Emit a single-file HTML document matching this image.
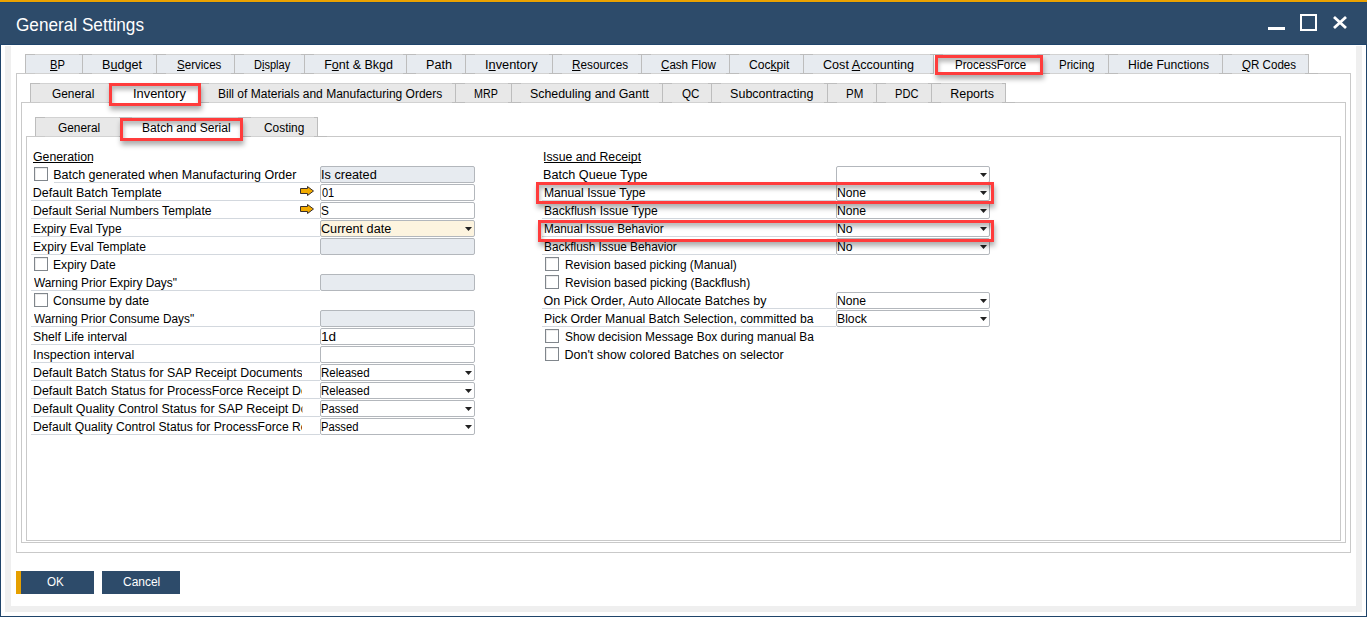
<!DOCTYPE html>
<html><head><meta charset="utf-8"><style>
html,body{margin:0;padding:0;width:1367px;height:617px;overflow:hidden;background:#fff;font-family:'Liberation Sans', sans-serif;}
u{text-decoration:underline;text-underline-offset:1px;}
</style></head><body>
<div style="position:absolute;left:0px;top:0px;width:1367px;height:617px;background:#fff"></div>
<div style="position:absolute;left:0px;top:0px;width:1367px;height:2px;background:#eba200"></div>
<div style="position:absolute;left:0px;top:2px;width:1367px;height:1px;background:#21486f"></div>
<div style="position:absolute;left:0px;top:3px;width:1367px;height:42px;background:#2d4b6a"></div>
<div style="position:absolute;left:0px;top:44px;width:1367px;height:1px;background:#1f446a"></div>
<div style="position:absolute;left:0px;top:45px;width:1px;height:572px;background:#1f446a"></div>
<div style="position:absolute;left:1366px;top:45px;width:1px;height:572px;background:#1f446a"></div>
<div style="position:absolute;left:0px;top:616px;width:1367px;height:1px;background:#1f446a"></div>
<div style="position:absolute;left:5px;top:46px;width:6px;height:566px;background:#efefef"></div>
<div style="position:absolute;left:1356px;top:46px;width:6px;height:566px;background:#efefef"></div>
<div style="position:absolute;left:5px;top:606px;width:1357px;height:6px;background:#efefef"></div>
<div style="position:absolute;left:1268px;top:27px;width:17px;height:3px;background:#fff"></div>
<div style="position:absolute;left:1300px;top:14px;width:17px;height:17px;border:2px solid #fff;box-sizing:border-box"></div>
<svg style="position:absolute;left:1331px;top:14px" width="18" height="18"><path d="M3 3 L15 14 M15 3 L3 14" stroke="#fff" stroke-width="2.8"/></svg>
<div style="position:absolute;left:16px;top:73px;width:1335px;height:480px;border:1px solid #c9c9c9;box-sizing:border-box"></div>
<div style="position:absolute;left:21px;top:102px;width:1325px;height:441px;border:1px solid #c9c9c9;box-sizing:border-box"></div>
<div style="position:absolute;left:26px;top:136px;width:1315px;height:405px;border:1px solid #c9c9c9;box-sizing:border-box"></div>
<div style="position:absolute;left:25px;top:54px;width:58px;height:19px;background:#e7ebf0"></div>
<div style="position:absolute;left:82px;top:54px;width:75px;height:19px;background:#e7ebf0"></div>
<div style="position:absolute;left:156px;top:54px;width:79px;height:19px;background:#e7ebf0"></div>
<div style="position:absolute;left:234px;top:54px;width:71px;height:19px;background:#e7ebf0"></div>
<div style="position:absolute;left:304px;top:54px;width:103px;height:19px;background:#e7ebf0"></div>
<div style="position:absolute;left:406px;top:54px;width:60px;height:19px;background:#e7ebf0"></div>
<div style="position:absolute;left:465px;top:54px;width:88px;height:19px;background:#e7ebf0"></div>
<div style="position:absolute;left:552px;top:54px;width:90px;height:19px;background:#e7ebf0"></div>
<div style="position:absolute;left:641px;top:54px;width:89px;height:19px;background:#e7ebf0"></div>
<div style="position:absolute;left:729px;top:54px;width:75px;height:19px;background:#e7ebf0"></div>
<div style="position:absolute;left:803px;top:54px;width:131px;height:19px;background:#e7ebf0"></div>
<div style="position:absolute;left:933px;top:54px;width:108px;height:19px;background:#fff"></div>
<div style="position:absolute;left:1040px;top:54px;width:69px;height:19px;background:#e7ebf0"></div>
<div style="position:absolute;left:1108px;top:54px;width:115px;height:19px;background:#e7ebf0"></div>
<div style="position:absolute;left:1222px;top:54px;width:87px;height:19px;background:#e7ebf0"></div>
<div style="position:absolute;left:25px;top:54px;width:1284px;height:1px;background:#d2d2d2"></div>
<div style="position:absolute;left:25px;top:54px;width:1px;height:19px;background:#bdbdbd"></div>
<div style="position:absolute;left:82px;top:54px;width:1px;height:19px;background:#bdbdbd"></div>
<div style="position:absolute;left:156px;top:54px;width:1px;height:19px;background:#bdbdbd"></div>
<div style="position:absolute;left:234px;top:54px;width:1px;height:19px;background:#bdbdbd"></div>
<div style="position:absolute;left:304px;top:54px;width:1px;height:19px;background:#bdbdbd"></div>
<div style="position:absolute;left:406px;top:54px;width:1px;height:19px;background:#bdbdbd"></div>
<div style="position:absolute;left:465px;top:54px;width:1px;height:19px;background:#bdbdbd"></div>
<div style="position:absolute;left:552px;top:54px;width:1px;height:19px;background:#bdbdbd"></div>
<div style="position:absolute;left:641px;top:54px;width:1px;height:19px;background:#bdbdbd"></div>
<div style="position:absolute;left:729px;top:54px;width:1px;height:19px;background:#bdbdbd"></div>
<div style="position:absolute;left:803px;top:54px;width:1px;height:19px;background:#bdbdbd"></div>
<div style="position:absolute;left:933px;top:54px;width:1px;height:19px;background:#bdbdbd"></div>
<div style="position:absolute;left:1040px;top:54px;width:1px;height:19px;background:#bdbdbd"></div>
<div style="position:absolute;left:1108px;top:54px;width:1px;height:19px;background:#bdbdbd"></div>
<div style="position:absolute;left:1222px;top:54px;width:1px;height:19px;background:#bdbdbd"></div>
<div style="position:absolute;left:1308px;top:54px;width:1px;height:19px;background:#bdbdbd"></div>
<div style="position:absolute;left:35px;top:73px;width:1273px;height:1px;background:#d2d2d2"></div>
<div style="position:absolute;left:25px;top:54px;width:10px;height:1px;background:#bdbdbd"></div>
<div style="position:absolute;left:79px;top:54px;width:13px;height:1px;background:#bdbdbd"></div>
<div style="position:absolute;left:79px;top:73px;width:13px;height:1px;background:#bdbdbd"></div>
<div style="position:absolute;left:153px;top:54px;width:13px;height:1px;background:#bdbdbd"></div>
<div style="position:absolute;left:153px;top:73px;width:13px;height:1px;background:#bdbdbd"></div>
<div style="position:absolute;left:231px;top:54px;width:13px;height:1px;background:#bdbdbd"></div>
<div style="position:absolute;left:231px;top:73px;width:13px;height:1px;background:#bdbdbd"></div>
<div style="position:absolute;left:301px;top:54px;width:13px;height:1px;background:#bdbdbd"></div>
<div style="position:absolute;left:301px;top:73px;width:13px;height:1px;background:#bdbdbd"></div>
<div style="position:absolute;left:403px;top:54px;width:13px;height:1px;background:#bdbdbd"></div>
<div style="position:absolute;left:403px;top:73px;width:13px;height:1px;background:#bdbdbd"></div>
<div style="position:absolute;left:462px;top:54px;width:13px;height:1px;background:#bdbdbd"></div>
<div style="position:absolute;left:462px;top:73px;width:13px;height:1px;background:#bdbdbd"></div>
<div style="position:absolute;left:549px;top:54px;width:13px;height:1px;background:#bdbdbd"></div>
<div style="position:absolute;left:549px;top:73px;width:13px;height:1px;background:#bdbdbd"></div>
<div style="position:absolute;left:638px;top:54px;width:13px;height:1px;background:#bdbdbd"></div>
<div style="position:absolute;left:638px;top:73px;width:13px;height:1px;background:#bdbdbd"></div>
<div style="position:absolute;left:726px;top:54px;width:13px;height:1px;background:#bdbdbd"></div>
<div style="position:absolute;left:726px;top:73px;width:13px;height:1px;background:#bdbdbd"></div>
<div style="position:absolute;left:800px;top:54px;width:13px;height:1px;background:#bdbdbd"></div>
<div style="position:absolute;left:800px;top:73px;width:13px;height:1px;background:#bdbdbd"></div>
<div style="position:absolute;left:930px;top:54px;width:13px;height:1px;background:#bdbdbd"></div>
<div style="position:absolute;left:930px;top:73px;width:13px;height:1px;background:#bdbdbd"></div>
<div style="position:absolute;left:1037px;top:54px;width:13px;height:1px;background:#bdbdbd"></div>
<div style="position:absolute;left:1037px;top:73px;width:13px;height:1px;background:#bdbdbd"></div>
<div style="position:absolute;left:1105px;top:54px;width:13px;height:1px;background:#bdbdbd"></div>
<div style="position:absolute;left:1105px;top:73px;width:13px;height:1px;background:#bdbdbd"></div>
<div style="position:absolute;left:1219px;top:54px;width:13px;height:1px;background:#bdbdbd"></div>
<div style="position:absolute;left:1219px;top:73px;width:13px;height:1px;background:#bdbdbd"></div>
<div style="position:absolute;left:1305px;top:54px;width:4px;height:1px;background:#bdbdbd"></div>
<div style="position:absolute;left:1305px;top:73px;width:13px;height:1px;background:#bdbdbd"></div>
<div style="position:absolute;left:934px;top:73px;width:106px;height:1px;background:#fff"></div>
<div style="position:absolute;left:30px;top:83px;width:82px;height:19px;background:#e8e8e8"></div>
<div style="position:absolute;left:111px;top:83px;width:89px;height:19px;background:#fff"></div>
<div style="position:absolute;left:199px;top:83px;width:257px;height:19px;background:#e8e8e8"></div>
<div style="position:absolute;left:455px;top:83px;width:57px;height:19px;background:#e8e8e8"></div>
<div style="position:absolute;left:511px;top:83px;width:152px;height:19px;background:#e8e8e8"></div>
<div style="position:absolute;left:662px;top:83px;width:50px;height:19px;background:#e8e8e8"></div>
<div style="position:absolute;left:711px;top:83px;width:117px;height:19px;background:#e8e8e8"></div>
<div style="position:absolute;left:827px;top:83px;width:50px;height:19px;background:#e8e8e8"></div>
<div style="position:absolute;left:876px;top:83px;width:56px;height:19px;background:#e8e8e8"></div>
<div style="position:absolute;left:931px;top:83px;width:75px;height:19px;background:#e8e8e8"></div>
<div style="position:absolute;left:30px;top:83px;width:976px;height:1px;background:#d2d2d2"></div>
<div style="position:absolute;left:30px;top:83px;width:1px;height:19px;background:#bdbdbd"></div>
<div style="position:absolute;left:111px;top:83px;width:1px;height:19px;background:#bdbdbd"></div>
<div style="position:absolute;left:199px;top:83px;width:1px;height:19px;background:#bdbdbd"></div>
<div style="position:absolute;left:455px;top:83px;width:1px;height:19px;background:#bdbdbd"></div>
<div style="position:absolute;left:511px;top:83px;width:1px;height:19px;background:#bdbdbd"></div>
<div style="position:absolute;left:662px;top:83px;width:1px;height:19px;background:#bdbdbd"></div>
<div style="position:absolute;left:711px;top:83px;width:1px;height:19px;background:#bdbdbd"></div>
<div style="position:absolute;left:827px;top:83px;width:1px;height:19px;background:#bdbdbd"></div>
<div style="position:absolute;left:876px;top:83px;width:1px;height:19px;background:#bdbdbd"></div>
<div style="position:absolute;left:931px;top:83px;width:1px;height:19px;background:#bdbdbd"></div>
<div style="position:absolute;left:1005px;top:83px;width:1px;height:19px;background:#bdbdbd"></div>
<div style="position:absolute;left:40px;top:102px;width:965px;height:1px;background:#d2d2d2"></div>
<div style="position:absolute;left:30px;top:83px;width:10px;height:1px;background:#bdbdbd"></div>
<div style="position:absolute;left:108px;top:83px;width:13px;height:1px;background:#bdbdbd"></div>
<div style="position:absolute;left:108px;top:102px;width:13px;height:1px;background:#bdbdbd"></div>
<div style="position:absolute;left:196px;top:83px;width:13px;height:1px;background:#bdbdbd"></div>
<div style="position:absolute;left:196px;top:102px;width:13px;height:1px;background:#bdbdbd"></div>
<div style="position:absolute;left:452px;top:83px;width:13px;height:1px;background:#bdbdbd"></div>
<div style="position:absolute;left:452px;top:102px;width:13px;height:1px;background:#bdbdbd"></div>
<div style="position:absolute;left:508px;top:83px;width:13px;height:1px;background:#bdbdbd"></div>
<div style="position:absolute;left:508px;top:102px;width:13px;height:1px;background:#bdbdbd"></div>
<div style="position:absolute;left:659px;top:83px;width:13px;height:1px;background:#bdbdbd"></div>
<div style="position:absolute;left:659px;top:102px;width:13px;height:1px;background:#bdbdbd"></div>
<div style="position:absolute;left:708px;top:83px;width:13px;height:1px;background:#bdbdbd"></div>
<div style="position:absolute;left:708px;top:102px;width:13px;height:1px;background:#bdbdbd"></div>
<div style="position:absolute;left:824px;top:83px;width:13px;height:1px;background:#bdbdbd"></div>
<div style="position:absolute;left:824px;top:102px;width:13px;height:1px;background:#bdbdbd"></div>
<div style="position:absolute;left:873px;top:83px;width:13px;height:1px;background:#bdbdbd"></div>
<div style="position:absolute;left:873px;top:102px;width:13px;height:1px;background:#bdbdbd"></div>
<div style="position:absolute;left:928px;top:83px;width:13px;height:1px;background:#bdbdbd"></div>
<div style="position:absolute;left:928px;top:102px;width:13px;height:1px;background:#bdbdbd"></div>
<div style="position:absolute;left:1002px;top:83px;width:4px;height:1px;background:#bdbdbd"></div>
<div style="position:absolute;left:1002px;top:102px;width:13px;height:1px;background:#bdbdbd"></div>
<div style="position:absolute;left:112px;top:102px;width:87px;height:1px;background:#fff"></div>
<div style="position:absolute;left:35px;top:117px;width:88px;height:19px;background:#e8e8e8"></div>
<div style="position:absolute;left:122px;top:117px;width:120px;height:19px;background:#fff"></div>
<div style="position:absolute;left:241px;top:117px;width:77px;height:19px;background:#e8e8e8"></div>
<div style="position:absolute;left:35px;top:117px;width:283px;height:1px;background:#d2d2d2"></div>
<div style="position:absolute;left:35px;top:117px;width:1px;height:19px;background:#bdbdbd"></div>
<div style="position:absolute;left:122px;top:117px;width:1px;height:19px;background:#bdbdbd"></div>
<div style="position:absolute;left:241px;top:117px;width:1px;height:19px;background:#bdbdbd"></div>
<div style="position:absolute;left:317px;top:117px;width:1px;height:19px;background:#bdbdbd"></div>
<div style="position:absolute;left:45px;top:136px;width:272px;height:1px;background:#d2d2d2"></div>
<div style="position:absolute;left:35px;top:117px;width:10px;height:1px;background:#bdbdbd"></div>
<div style="position:absolute;left:119px;top:117px;width:13px;height:1px;background:#bdbdbd"></div>
<div style="position:absolute;left:119px;top:136px;width:13px;height:1px;background:#bdbdbd"></div>
<div style="position:absolute;left:238px;top:117px;width:13px;height:1px;background:#bdbdbd"></div>
<div style="position:absolute;left:238px;top:136px;width:13px;height:1px;background:#bdbdbd"></div>
<div style="position:absolute;left:314px;top:117px;width:4px;height:1px;background:#bdbdbd"></div>
<div style="position:absolute;left:314px;top:136px;width:13px;height:1px;background:#bdbdbd"></div>
<div style="position:absolute;left:123px;top:136px;width:118px;height:1px;background:#fff"></div>
<div style="position:absolute;left:33px;top:162px;width:60px;height:1px;background:#000"></div>
<div style="position:absolute;left:544px;top:162px;width:97px;height:1px;background:#000"></div>
<div style="position:absolute;left:34px;top:167px;width:14px;height:14px;background:#fff;border:1px solid #80868c;box-sizing:border-box;box-shadow:inset 1px 1px 0 #ececec"></div>
<div style="position:absolute;left:54px;top:182px;width:266px;height:1px;background:#d3d8de"></div>
<div style="position:absolute;left:320px;top:166px;width:155px;height:17px;background:#e7ebf0;border:1px solid #b3b7bc;border-radius:2px;box-sizing:border-box"></div>
<div style="position:absolute;left:31px;top:200px;width:289px;height:1px;background:#d3d8de"></div>
<div style="position:absolute;left:320px;top:184px;width:155px;height:17px;background:#fff;border:1px solid #b3b7bc;border-radius:2px;box-sizing:border-box"></div>
<div style="position:absolute;left:31px;top:218px;width:289px;height:1px;background:#d3d8de"></div>
<div style="position:absolute;left:320px;top:202px;width:155px;height:17px;background:#fff;border:1px solid #b3b7bc;border-radius:2px;box-sizing:border-box"></div>
<div style="position:absolute;left:31px;top:236px;width:289px;height:1px;background:#d3d8de"></div>
<div style="position:absolute;left:320px;top:220px;width:155px;height:17px;background:#fdf4df;border:1px solid #b3b7bc;border-radius:2px;box-sizing:border-box"></div>
<svg style="position:absolute;left:465px;top:227px" width="7" height="5"><path d="M0 0 H7 L3.5 4 Z" fill="#222"/></svg>
<div style="position:absolute;left:31px;top:254px;width:289px;height:1px;background:#d3d8de"></div>
<div style="position:absolute;left:320px;top:238px;width:155px;height:17px;background:#e7ebf0;border:1px solid #b3b7bc;border-radius:2px;box-sizing:border-box"></div>
<div style="position:absolute;left:34px;top:257px;width:14px;height:14px;background:#fff;border:1px solid #80868c;box-sizing:border-box;box-shadow:inset 1px 1px 0 #ececec"></div>
<div style="position:absolute;left:31px;top:290px;width:289px;height:1px;background:#d3d8de"></div>
<div style="position:absolute;left:320px;top:274px;width:155px;height:17px;background:#e7ebf0;border:1px solid #b3b7bc;border-radius:2px;box-sizing:border-box"></div>
<div style="position:absolute;left:34px;top:293px;width:14px;height:14px;background:#fff;border:1px solid #80868c;box-sizing:border-box;box-shadow:inset 1px 1px 0 #ececec"></div>
<div style="position:absolute;left:31px;top:326px;width:289px;height:1px;background:#d3d8de"></div>
<div style="position:absolute;left:320px;top:310px;width:155px;height:17px;background:#e7ebf0;border:1px solid #b3b7bc;border-radius:2px;box-sizing:border-box"></div>
<div style="position:absolute;left:31px;top:344px;width:289px;height:1px;background:#d3d8de"></div>
<div style="position:absolute;left:320px;top:328px;width:155px;height:17px;background:#fff;border:1px solid #b3b7bc;border-radius:2px;box-sizing:border-box"></div>
<div style="position:absolute;left:31px;top:362px;width:289px;height:1px;background:#d3d8de"></div>
<div style="position:absolute;left:320px;top:346px;width:155px;height:17px;background:#fff;border:1px solid #b3b7bc;border-radius:2px;box-sizing:border-box"></div>
<div style="position:absolute;left:31px;top:380px;width:289px;height:1px;background:#d3d8de"></div>
<div style="position:absolute;left:320px;top:364px;width:155px;height:17px;background:#fff;border:1px solid #b3b7bc;border-radius:2px;box-sizing:border-box"></div>
<svg style="position:absolute;left:465px;top:371px" width="7" height="5"><path d="M0 0 H7 L3.5 4 Z" fill="#222"/></svg>
<div style="position:absolute;left:31px;top:398px;width:289px;height:1px;background:#d3d8de"></div>
<div style="position:absolute;left:320px;top:382px;width:155px;height:17px;background:#fff;border:1px solid #b3b7bc;border-radius:2px;box-sizing:border-box"></div>
<svg style="position:absolute;left:465px;top:389px" width="7" height="5"><path d="M0 0 H7 L3.5 4 Z" fill="#222"/></svg>
<div style="position:absolute;left:31px;top:416px;width:289px;height:1px;background:#d3d8de"></div>
<div style="position:absolute;left:320px;top:400px;width:155px;height:17px;background:#fff;border:1px solid #b3b7bc;border-radius:2px;box-sizing:border-box"></div>
<svg style="position:absolute;left:465px;top:407px" width="7" height="5"><path d="M0 0 H7 L3.5 4 Z" fill="#222"/></svg>
<div style="position:absolute;left:31px;top:434px;width:289px;height:1px;background:#d3d8de"></div>
<div style="position:absolute;left:320px;top:418px;width:155px;height:17px;background:#fff;border:1px solid #b3b7bc;border-radius:2px;box-sizing:border-box"></div>
<svg style="position:absolute;left:465px;top:425px" width="7" height="5"><path d="M0 0 H7 L3.5 4 Z" fill="#222"/></svg>
<svg style="position:absolute;left:300px;top:186px" width="15" height="11"><path d="M0.5 2.5 H7.5 V0.5 L13.5 5 L7.5 9.5 V7.5 H0.5 Z" fill="#f2ab00" stroke="#3a302c" stroke-width="1"/></svg>
<svg style="position:absolute;left:300px;top:204px" width="15" height="11"><path d="M0.5 2.5 H7.5 V0.5 L13.5 5 L7.5 9.5 V7.5 H0.5 Z" fill="#f2ab00" stroke="#3a302c" stroke-width="1"/></svg>
<div style="position:absolute;left:542px;top:182px;width:294px;height:1px;background:#d3d8de"></div>
<div style="position:absolute;left:836px;top:166px;width:154px;height:17px;background:#fff;border:1px solid #b3b7bc;border-radius:2px;box-sizing:border-box"></div>
<svg style="position:absolute;left:980px;top:173px" width="7" height="5"><path d="M0 0 H7 L3.5 4 Z" fill="#222"/></svg>
<div style="position:absolute;left:542px;top:200px;width:294px;height:1px;background:#d3d8de"></div>
<div style="position:absolute;left:836px;top:184px;width:154px;height:17px;background:#fff;border:1px solid #b3b7bc;border-radius:2px;box-sizing:border-box"></div>
<svg style="position:absolute;left:980px;top:191px" width="7" height="5"><path d="M0 0 H7 L3.5 4 Z" fill="#222"/></svg>
<div style="position:absolute;left:542px;top:218px;width:294px;height:1px;background:#d3d8de"></div>
<div style="position:absolute;left:836px;top:202px;width:154px;height:17px;background:#fff;border:1px solid #b3b7bc;border-radius:2px;box-sizing:border-box"></div>
<svg style="position:absolute;left:980px;top:209px" width="7" height="5"><path d="M0 0 H7 L3.5 4 Z" fill="#222"/></svg>
<div style="position:absolute;left:542px;top:236px;width:294px;height:1px;background:#d3d8de"></div>
<div style="position:absolute;left:836px;top:220px;width:154px;height:17px;background:#fff;border:1px solid #b3b7bc;border-radius:2px;box-sizing:border-box"></div>
<svg style="position:absolute;left:980px;top:227px" width="7" height="5"><path d="M0 0 H7 L3.5 4 Z" fill="#222"/></svg>
<div style="position:absolute;left:542px;top:254px;width:294px;height:1px;background:#d3d8de"></div>
<div style="position:absolute;left:836px;top:238px;width:154px;height:17px;background:#fff;border:1px solid #b3b7bc;border-radius:2px;box-sizing:border-box"></div>
<svg style="position:absolute;left:980px;top:245px" width="7" height="5"><path d="M0 0 H7 L3.5 4 Z" fill="#222"/></svg>
<div style="position:absolute;left:545px;top:257px;width:14px;height:14px;background:#fff;border:1px solid #80868c;box-sizing:border-box;box-shadow:inset 1px 1px 0 #ececec"></div>
<div style="position:absolute;left:545px;top:275px;width:14px;height:14px;background:#fff;border:1px solid #80868c;box-sizing:border-box;box-shadow:inset 1px 1px 0 #ececec"></div>
<div style="position:absolute;left:542px;top:308px;width:294px;height:1px;background:#d3d8de"></div>
<div style="position:absolute;left:836px;top:292px;width:154px;height:17px;background:#fff;border:1px solid #b3b7bc;border-radius:2px;box-sizing:border-box"></div>
<svg style="position:absolute;left:980px;top:299px" width="7" height="5"><path d="M0 0 H7 L3.5 4 Z" fill="#222"/></svg>
<div style="position:absolute;left:542px;top:326px;width:294px;height:1px;background:#d3d8de"></div>
<div style="position:absolute;left:836px;top:310px;width:154px;height:17px;background:#fff;border:1px solid #b3b7bc;border-radius:2px;box-sizing:border-box"></div>
<svg style="position:absolute;left:980px;top:317px" width="7" height="5"><path d="M0 0 H7 L3.5 4 Z" fill="#222"/></svg>
<div style="position:absolute;left:545px;top:329px;width:14px;height:14px;background:#fff;border:1px solid #80868c;box-sizing:border-box;box-shadow:inset 1px 1px 0 #ececec"></div>
<div style="position:absolute;left:545px;top:347px;width:14px;height:14px;background:#fff;border:1px solid #80868c;box-sizing:border-box;box-shadow:inset 1px 1px 0 #ececec"></div>
<div style="position:absolute;left:16px;top:571px;width:78px;height:23px;background:#2d4b6a"></div>
<div style="position:absolute;left:16px;top:571px;width:5px;height:23px;background:#e6a000"></div>
<div style="position:absolute;left:102px;top:571px;width:78px;height:23px;background:#2d4b6a"></div>
<div style="position:absolute;left:16.10px;top:10px;font-size:19px;line-height:30px;white-space:pre;color:#fff;transform-origin:0 0;transform:scaleX(0.9043);">General Settings</div>
<div style="position:absolute;left:50.21px;top:50px;font-size:12.5px;line-height:30px;white-space:pre;color:#000;transform-origin:0 0;transform:scaleX(0.8933);"><u>B</u>P</div>
<div style="position:absolute;left:102.39px;top:50px;font-size:12.5px;line-height:30px;white-space:pre;color:#000;transform-origin:0 0;transform:scaleX(1.0128);">B<u>u</u>dget</div>
<div style="position:absolute;left:176.57px;top:50px;font-size:12.5px;line-height:30px;white-space:pre;color:#000;transform-origin:0 0;transform:scaleX(0.9255);"><u>S</u>ervices</div>
<div style="position:absolute;left:254.32px;top:50px;font-size:12.5px;line-height:30px;white-space:pre;color:#000;transform-origin:0 0;transform:scaleX(0.8825);">D<u>i</u>splay</div>
<div style="position:absolute;left:324.20px;top:50px;font-size:12.5px;line-height:30px;white-space:pre;color:#000;transform-origin:0 0;">F<u>o</u>nt &amp; Bkgd</div>
<div style="position:absolute;left:425.99px;top:50px;font-size:12.5px;line-height:30px;white-space:pre;color:#000;transform-origin:0 0;transform:scaleX(1.0083);">Path</div>
<div style="position:absolute;left:485.48px;top:50px;font-size:12.5px;line-height:30px;white-space:pre;color:#000;transform-origin:0 0;transform:scaleX(1.0216);">I<u>n</u>ventory</div>
<div style="position:absolute;left:572.46px;top:50px;font-size:12.5px;line-height:30px;white-space:pre;color:#000;transform-origin:0 0;transform:scaleX(0.9397);"><u>R</u>esources</div>
<div style="position:absolute;left:660.97px;top:50px;font-size:12.5px;line-height:30px;white-space:pre;color:#000;transform-origin:0 0;transform:scaleX(0.9276);"><u>C</u>ash Flow</div>
<div style="position:absolute;left:749.23px;top:50px;font-size:12.5px;line-height:30px;white-space:pre;color:#000;transform-origin:0 0;transform:scaleX(0.9683);">Coc<u>k</u>pit</div>
<div style="position:absolute;left:822.89px;top:50px;font-size:12.5px;line-height:30px;white-space:pre;color:#000;transform-origin:0 0;transform:scaleX(1.0079);">Cost <u>A</u>ccounting</div>
<div style="position:absolute;left:955.38px;top:50px;font-size:12.5px;line-height:30px;white-space:pre;color:#000;transform-origin:0 0;transform:scaleX(0.9237);">ProcessForce</div>
<div style="position:absolute;left:1059.28px;top:50px;font-size:12.5px;line-height:30px;white-space:pre;color:#000;transform-origin:0 0;transform:scaleX(0.9243);">Pricing</div>
<div style="position:absolute;left:1128.33px;top:50px;font-size:12.5px;line-height:30px;white-space:pre;color:#000;transform-origin:0 0;transform:scaleX(0.9732);">Hide Functions</div>
<div style="position:absolute;left:1242.27px;top:50px;font-size:12.5px;line-height:30px;white-space:pre;color:#000;transform-origin:0 0;transform:scaleX(0.9263);"><u>Q</u>R Codes</div>
<div style="position:absolute;left:51.55px;top:79px;font-size:12.5px;line-height:30px;white-space:pre;color:#000;transform-origin:0 0;transform:scaleX(0.9512);">General</div>
<div style="position:absolute;left:132.97px;top:79px;font-size:12.5px;line-height:30px;white-space:pre;color:#000;transform-origin:0 0;transform:scaleX(1.0275);">Inventory</div>
<div style="position:absolute;left:218.14px;top:79px;font-size:12.5px;line-height:30px;white-space:pre;color:#000;transform-origin:0 0;transform:scaleX(0.9608);">Bill of Materials and Manufacturing Orders</div>
<div style="position:absolute;left:474.34px;top:79px;font-size:12.5px;line-height:30px;white-space:pre;color:#000;transform-origin:0 0;transform:scaleX(0.8577);">MRP</div>
<div style="position:absolute;left:530.31px;top:79px;font-size:12.5px;line-height:30px;white-space:pre;color:#000;transform-origin:0 0;transform:scaleX(0.9899);">Scheduling and Gantt</div>
<div style="position:absolute;left:681.57px;top:79px;font-size:12.5px;line-height:30px;white-space:pre;color:#000;transform-origin:0 0;transform:scaleX(0.9294);">QC</div>
<div style="position:absolute;left:730.10px;top:79px;font-size:12.5px;line-height:30px;white-space:pre;color:#000;transform-origin:0 0;">Subcontracting</div>
<div style="position:absolute;left:846.08px;top:79px;font-size:12.5px;line-height:30px;white-space:pre;color:#000;transform-origin:0 0;transform:scaleX(0.9235);">PM</div>
<div style="position:absolute;left:895.31px;top:79px;font-size:12.5px;line-height:30px;white-space:pre;color:#000;transform-origin:0 0;transform:scaleX(0.8880);">PDC</div>
<div style="position:absolute;left:950.20px;top:79px;font-size:12.5px;line-height:30px;white-space:pre;color:#000;transform-origin:0 0;">Reports</div>
<div style="position:absolute;left:57.55px;top:113px;font-size:12.5px;line-height:30px;white-space:pre;color:#000;transform-origin:0 0;transform:scaleX(0.9488);">General</div>
<div style="position:absolute;left:142.43px;top:113px;font-size:12.5px;line-height:30px;white-space:pre;color:#000;transform-origin:0 0;transform:scaleX(0.9667);">Batch and Serial</div>
<div style="position:absolute;left:263.65px;top:113px;font-size:12.5px;line-height:30px;white-space:pre;color:#000;transform-origin:0 0;transform:scaleX(0.9512);">Costing</div>
<div style="position:absolute;left:32.62px;top:142px;font-size:12.5px;line-height:30px;white-space:pre;color:#000;transform-origin:0 0;transform:scaleX(0.9833);">Generation</div>
<div style="position:absolute;left:543.22px;top:142px;font-size:12.5px;line-height:30px;white-space:pre;color:#000;transform-origin:0 0;transform:scaleX(0.9798);">Issue and Receipt</div>
<div style="position:absolute;left:53.20px;top:160px;font-size:12.5px;line-height:30px;white-space:pre;color:#000;transform-origin:0 0;width:248.0px;overflow:hidden;">Batch generated when Manufacturing Order</div>
<div style="position:absolute;left:321.18px;top:160px;font-size:12.5px;line-height:30px;white-space:pre;color:#000;transform-origin:0 0;transform:scaleX(1.0151);">Is created</div>
<div style="position:absolute;left:32.80px;top:178px;font-size:12.5px;line-height:30px;white-space:pre;color:#000;transform-origin:0 0;width:267.9px;overflow:hidden;">Default Batch Template</div>
<div style="position:absolute;left:322.20px;top:178px;font-size:12.5px;line-height:30px;white-space:pre;color:#000;transform-origin:0 0;transform:scaleX(0.8786);">01</div>
<div style="position:absolute;left:32.83px;top:196px;font-size:12.5px;line-height:30px;white-space:pre;color:#000;transform-origin:0 0;transform:scaleX(0.9747);width:276.2px;overflow:hidden;">Default Serial Numbers Template</div>
<div style="position:absolute;left:321.26px;top:196px;font-size:12.5px;line-height:30px;white-space:pre;color:#000;transform-origin:0 0;transform:scaleX(0.9429);">S</div>
<div style="position:absolute;left:32.85px;top:214px;font-size:12.5px;line-height:30px;white-space:pre;color:#000;transform-origin:0 0;transform:scaleX(0.9533);width:282.4px;overflow:hidden;">Expiry Eval Type</div>
<div style="position:absolute;left:321.19px;top:214px;font-size:12.5px;line-height:30px;white-space:pre;color:#000;transform-origin:0 0;transform:scaleX(1.0103);">Current date</div>
<div style="position:absolute;left:32.83px;top:232px;font-size:12.5px;line-height:30px;white-space:pre;color:#000;transform-origin:0 0;transform:scaleX(0.9696);width:277.6px;overflow:hidden;">Expiry Eval Template</div>
<div style="position:absolute;left:53.23px;top:250px;font-size:12.5px;line-height:30px;white-space:pre;color:#000;transform-origin:0 0;transform:scaleX(0.9698);width:256.5px;overflow:hidden;">Expiry Date</div>
<div style="position:absolute;left:33.80px;top:268px;font-size:12.5px;line-height:30px;white-space:pre;color:#000;transform-origin:0 0;transform:scaleX(0.9493);width:282.5px;overflow:hidden;">Warning Prior Expiry Days&quot;</div>
<div style="position:absolute;left:53.22px;top:286px;font-size:12.5px;line-height:30px;white-space:pre;color:#000;transform-origin:0 0;transform:scaleX(0.9804);width:253.8px;overflow:hidden;">Consume by date</div>
<div style="position:absolute;left:33.80px;top:304px;font-size:12.5px;line-height:30px;white-space:pre;color:#000;transform-origin:0 0;transform:scaleX(0.9456);width:283.6px;overflow:hidden;">Warning Prior Consume Days&quot;</div>
<div style="position:absolute;left:32.82px;top:322px;font-size:12.5px;line-height:30px;white-space:pre;color:#000;transform-origin:0 0;transform:scaleX(0.9809);width:274.4px;overflow:hidden;">Shelf Life interval</div>
<div style="position:absolute;left:321.12px;top:322px;font-size:12.5px;line-height:30px;white-space:pre;color:#000;transform-origin:0 0;transform:scaleX(1.0833);">1d</div>
<div style="position:absolute;left:32.79px;top:340px;font-size:12.5px;line-height:30px;white-space:pre;color:#000;transform-origin:0 0;transform:scaleX(1.0051);width:267.9px;overflow:hidden;">Inspection interval</div>
<div style="position:absolute;left:32.81px;top:358px;font-size:12.5px;line-height:30px;white-space:pre;color:#000;transform-origin:0 0;transform:scaleX(0.9886);width:272.3px;overflow:hidden;">Default Batch Status for SAP Receipt Documents</div>
<div style="position:absolute;left:321.28px;top:358px;font-size:12.5px;line-height:30px;white-space:pre;color:#000;transform-origin:0 0;transform:scaleX(0.9216);">Released</div>
<div style="position:absolute;left:32.81px;top:376px;font-size:12.5px;line-height:30px;white-space:pre;color:#000;transform-origin:0 0;transform:scaleX(0.9889);width:272.2px;overflow:hidden;">Default Batch Status for ProcessForce Receipt Documents</div>
<div style="position:absolute;left:321.28px;top:376px;font-size:12.5px;line-height:30px;white-space:pre;color:#000;transform-origin:0 0;transform:scaleX(0.9216);">Released</div>
<div style="position:absolute;left:32.81px;top:394px;font-size:12.5px;line-height:30px;white-space:pre;color:#000;transform-origin:0 0;transform:scaleX(0.9941);width:270.8px;overflow:hidden;">Default Quality Control Status for SAP Receipt Documents</div>
<div style="position:absolute;left:321.30px;top:394px;font-size:12.5px;line-height:30px;white-space:pre;color:#000;transform-origin:0 0;transform:scaleX(0.8975);">Passed</div>
<div style="position:absolute;left:32.83px;top:412px;font-size:12.5px;line-height:30px;white-space:pre;color:#000;transform-origin:0 0;transform:scaleX(0.9709);width:277.2px;overflow:hidden;">Default Quality Control Status for ProcessForce Receipt Documents</div>
<div style="position:absolute;left:321.30px;top:412px;font-size:12.5px;line-height:30px;white-space:pre;color:#000;transform-origin:0 0;transform:scaleX(0.8975);">Passed</div>
<div style="position:absolute;left:543.49px;top:160px;font-size:12.5px;line-height:30px;white-space:pre;color:#000;transform-origin:0 0;transform:scaleX(1.0118);">Batch Queue Type</div>
<div style="position:absolute;left:543.53px;top:178px;font-size:12.5px;line-height:30px;white-space:pre;color:#000;transform-origin:0 0;transform:scaleX(0.9699);">Manual Issue Type</div>
<div style="position:absolute;left:837.23px;top:178px;font-size:12.5px;line-height:30px;white-space:pre;color:#000;transform-origin:0 0;transform:scaleX(0.9724);">None</div>
<div style="position:absolute;left:543.54px;top:196px;font-size:12.5px;line-height:30px;white-space:pre;color:#000;transform-origin:0 0;transform:scaleX(0.9650);">Backflush Issue Type</div>
<div style="position:absolute;left:837.23px;top:196px;font-size:12.5px;line-height:30px;white-space:pre;color:#000;transform-origin:0 0;transform:scaleX(0.9724);">None</div>
<div style="position:absolute;left:543.56px;top:214px;font-size:12.5px;line-height:30px;white-space:pre;color:#000;transform-origin:0 0;transform:scaleX(0.9405);">Manual Issue Behavior</div>
<div style="position:absolute;left:837.23px;top:214px;font-size:12.5px;line-height:30px;white-space:pre;color:#000;transform-origin:0 0;transform:scaleX(0.9733);">No</div>
<div style="position:absolute;left:543.55px;top:232px;font-size:12.5px;line-height:30px;white-space:pre;color:#000;transform-origin:0 0;transform:scaleX(0.9460);">Backflush Issue Behavior</div>
<div style="position:absolute;left:837.23px;top:232px;font-size:12.5px;line-height:30px;white-space:pre;color:#000;transform-origin:0 0;transform:scaleX(0.9733);">No</div>
<div style="position:absolute;left:564.55px;top:250px;font-size:12.5px;line-height:30px;white-space:pre;color:#000;transform-origin:0 0;transform:scaleX(0.9508);">Revision based picking (Manual)</div>
<div style="position:absolute;left:564.54px;top:268px;font-size:12.5px;line-height:30px;white-space:pre;color:#000;transform-origin:0 0;transform:scaleX(0.9552);">Revision based picking (Backflush)</div>
<div style="position:absolute;left:543.50px;top:286px;font-size:12.5px;line-height:30px;white-space:pre;color:#000;transform-origin:0 0;">On Pick Order, Auto Allocate Batches by</div>
<div style="position:absolute;left:837.23px;top:286px;font-size:12.5px;line-height:30px;white-space:pre;color:#000;transform-origin:0 0;transform:scaleX(0.9724);">None</div>
<div style="position:absolute;left:543.52px;top:304px;font-size:12.5px;line-height:30px;white-space:pre;color:#000;transform-origin:0 0;transform:scaleX(0.9771);">Pick Order Manual Batch Selection, committed ba</div>
<div style="position:absolute;left:837.22px;top:304px;font-size:12.5px;line-height:30px;white-space:pre;color:#000;transform-origin:0 0;transform:scaleX(0.9759);">Block</div>
<div style="position:absolute;left:564.55px;top:322px;font-size:12.5px;line-height:30px;white-space:pre;color:#000;transform-origin:0 0;transform:scaleX(0.9527);">Show decision Message Box during manual Ba</div>
<div style="position:absolute;left:564.50px;top:340px;font-size:12.5px;line-height:30px;white-space:pre;color:#000;transform-origin:0 0;">Don&#x27;t show colored Batches on selector</div>
<div style="position:absolute;left:46.57px;top:567px;font-size:12.5px;line-height:30px;white-space:pre;color:#fff;transform-origin:0 0;transform:scaleX(0.9294);">OK</div>
<div style="position:absolute;left:123.34px;top:567px;font-size:12.5px;line-height:30px;white-space:pre;color:#fff;transform-origin:0 0;transform:scaleX(0.9568);">Cancel</div>
<div style="position:absolute;left:935px;top:55px;width:108px;height:20px;border:3px solid #ff3c3c;box-sizing:border-box;box-shadow:1px 4px 5px rgba(0,0,0,0.32), inset 1px 4px 4px rgba(0,0,0,0.27)"></div>
<div style="position:absolute;left:109px;top:83px;width:92px;height:23px;border:3px solid #ff3c3c;box-sizing:border-box;box-shadow:1px 4px 5px rgba(0,0,0,0.32), inset 1px 4px 4px rgba(0,0,0,0.27)"></div>
<div style="position:absolute;left:120px;top:118px;width:123px;height:23px;border:3px solid #ff3c3c;box-sizing:border-box;box-shadow:1px 4px 5px rgba(0,0,0,0.32), inset 1px 4px 4px rgba(0,0,0,0.27)"></div>
<div style="position:absolute;left:536px;top:182px;width:458px;height:22px;border:3px solid #ff3c3c;box-sizing:border-box;box-shadow:1px 4px 5px rgba(0,0,0,0.32), inset 1px 4px 4px rgba(0,0,0,0.27)"></div>
<div style="position:absolute;left:538px;top:220px;width:456px;height:22px;border:3px solid #ff3c3c;box-sizing:border-box;box-shadow:1px 4px 5px rgba(0,0,0,0.32), inset 1px 4px 4px rgba(0,0,0,0.27)"></div>
</body></html>
